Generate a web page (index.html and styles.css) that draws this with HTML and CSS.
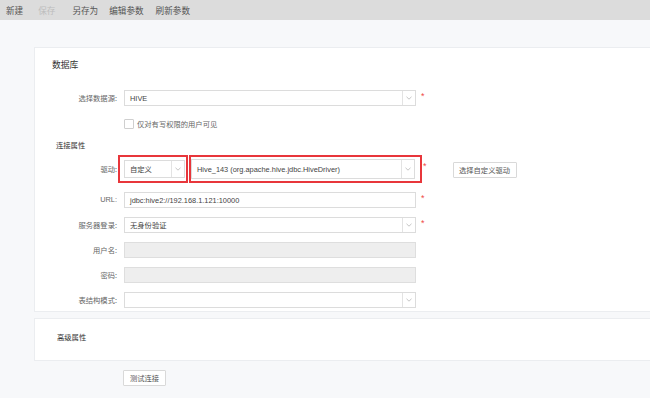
FILE: index.html
```html
<!DOCTYPE html>
<html lang="zh-CN">
<head>
<meta charset="utf-8">
<title>数据库连接</title>
<link rel="stylesheet" href="styles.css">
</head>
<body>
<div class="toolbar">
  <span class="tb tb-new">新建</span>
  <span class="tb tb-save disabled">保存</span>
  <span class="tb tb-saveas">另存为</span>
  <span class="tb tb-edit">编辑参数</span>
  <span class="tb tb-refresh">刷新参数</span>
</div>
<div class="page">
  <section class="card card-main">
    <h2 class="title">数据库</h2>
    <div class="row row-first">
      <label class="lbl">选择数据源:</label>
      <div class="select field"><span class="val latin">HIVE</span><span class="arrow"><svg width="6" height="4" viewBox="0 0 6 4"><polyline points="0.5,0.8 3,3.2 5.5,0.8" fill="none" stroke="#b5b5b5" stroke-width="0.8"/></svg></span></div>
      <span class="req">*</span>
    </div>
    <div class="row row-check">
      <span class="lbl"></span>
      <span class="checkbox"></span>
      <span class="check-text">仅对有写权限的用户可见</span>
    </div>
    <h3 class="subtitle">连接属性</h3>
    <div class="row row-driver">
      <label class="lbl">驱动:</label>
      <div class="mark mark-type">
        <div class="select sel-type"><span class="val">自定义</span><span class="arrow"><svg width="6" height="4" viewBox="0 0 6 4"><polyline points="0.5,0.8 3,3.2 5.5,0.8" fill="none" stroke="#b5b5b5" stroke-width="0.8"/></svg></span></div>
      </div>
      <div class="mark mark-driver">
        <div class="select sel-driver"><span class="val latin">Hive_143 (org.apache.hive.jdbc.HiveDriver)</span><span class="arrow"><svg width="6" height="4" viewBox="0 0 6 4"><polyline points="0.5,0.8 3,3.2 5.5,0.8" fill="none" stroke="#b5b5b5" stroke-width="0.8"/></svg></span></div>
      </div>
      <span class="req req-driver">*</span>
      <button class="btn btn-driver">选择自定义驱动</button>
    </div>
    <div class="row">
      <label class="lbl latin">URL:</label>
      <div class="input field"><span class="val latin">jdbc:hive2://192.168.1.121:10000</span></div>
      <span class="req">*</span>
    </div>
    <div class="row">
      <label class="lbl">服务器登录:</label>
      <div class="select field"><span class="val">无身份验证</span><span class="arrow"><svg width="6" height="4" viewBox="0 0 6 4"><polyline points="0.5,0.8 3,3.2 5.5,0.8" fill="none" stroke="#b5b5b5" stroke-width="0.8"/></svg></span></div>
      <span class="req">*</span>
    </div>
    <div class="row">
      <label class="lbl">用户名:</label>
      <div class="input field disabled"></div>
    </div>
    <div class="row">
      <label class="lbl">密码:</label>
      <div class="input field disabled"></div>
    </div>
    <div class="row">
      <label class="lbl">表结构模式:</label>
      <div class="select field"><span class="val"></span><span class="arrow"><svg width="6" height="4" viewBox="0 0 6 4"><polyline points="0.5,0.8 3,3.2 5.5,0.8" fill="none" stroke="#b5b5b5" stroke-width="0.8"/></svg></span></div>
    </div>
  </section>
  <section class="card card-adv">
    <h3 class="subtitle adv-title">高级属性</h3>
  </section>
  <div class="actions">
    <button class="btn btn-test">测试连接</button>
  </div>
</div>
</body>
</html>
```
FILE: styles.css
```css
* { box-sizing: border-box; }
html, body {
  margin: 0;
  padding: 0;
  background: #f7f8fa;
  overflow: hidden;
  font-family: "Noto Sans CJK SC", "Liberation Sans", sans-serif;
  color: #555;
}
.toolbar {
  height: 20px;
  background: #dcdcdc;
  display: flex;
  align-items: center;
  padding-left: 6px;
  font-size: 8.6px;
  color: #555;
}
.tb { line-height: 12px; white-space: nowrap; }
.tb-save { margin-left: 15px; }
.tb-saveas { margin-left: 17px; }
.tb-edit { margin-left: 11px; }
.tb-refresh { margin-left: 12px; }
.tb.disabled { color: #bdbdbd; }

.page {
  padding: 27px 0 0 34px;
}
.card {
  background: #fff;
  border: 1px solid #ebedf0;
  border-right: none;
  margin-right: -10px;
}
.card-main {
  height: 265px;
  padding-top: 12px;
}
.title {
  margin: 0 0 0 17px;
  font-size: 8.8px;
  line-height: 10px;
  font-weight: normal;
  color: #333;
}
.subtitle {
  margin: 8px 0 0 21px;
  font-size: 7.3px;
  line-height: 10px;
  font-weight: normal;
  color: #333;
}
.row {
  display: flex;
  align-items: flex-start;
  margin-top: 9px;
  height: 16px;
}
.row-first { margin-top: 20px; }
.row-check { margin-top: 10px; align-items: center; }
.row-driver { margin-top: 5px; height: 28px; align-items: flex-start; }
.lbl {
  width: 82px;
  flex: none;
  text-align: right;
  font-size: 7.3px;
  line-height: 16px;
  color: #666;
  margin-right: 7px;
}
.row-driver .lbl { line-height: 28px; }
.latin { font-family: "Liberation Sans", "Noto Sans CJK SC", sans-serif; }
.lbl.latin { font-size: 7.4px; }

.select, .input {
  height: 16px;
  border: 1px solid #dcdcdc;
  background: #fff;
  display: flex;
  align-items: center;
  flex: none;
}
.field { width: 292px; }
.input.disabled { background: #eeeeee; border-color: #dedede; }
.val {
  flex: 1;
  padding-left: 5px;
  font-size: 7.3px;
  color: #444;
  white-space: nowrap;
  overflow: hidden;
}
.val.latin { font-size: 7.4px; }
.arrow {
  width: 13px;
  height: 100%;
  border-left: 1px solid #e3e3e3;
  display: flex;
  align-items: center;
  justify-content: center;
  flex: none;
}
.arrow svg { display: block; }
.req {
  color: #f04848;
  font-family: "Liberation Sans", sans-serif;
  font-size: 9px;
  line-height: 9px;
  margin: 2px 0 0 5px;
}
.checkbox {
  width: 10px;
  height: 10px;
  border: 1px solid #cfcfcf;
  border-radius: 1px;
  background: #fff;
  flex: none;
}
.check-text {
  margin-left: 3px;
  font-size: 7.3px;
  color: #666;
}

.mark {
  border: 2px solid #e8363b;
  height: 28px;
  display: flex;
  align-items: center;
  flex: none;
}
.mark-type {
  width: 70px;
  margin-left: -6px;
  padding-left: 4px;
}
.sel-type { width: 61px; height: 18px; }
.mark-driver {
  width: 233px;
  margin-left: 1px;
}
.sel-driver { width: 224px; height: 20px; }
.req-driver { margin: 7px 0 0 1px; }
.btn {
  font-family: "Noto Sans CJK SC", sans-serif;
  font-size: 7.3px;
  color: #555;
  background: #fff;
  border: 1px solid #d9d9d9;
  border-radius: 1px;
  height: 16px;
  padding: 0;
  line-height: 14px;
}
.btn-driver {
  width: 64px;
  margin: 7px 0 0 26px;
}
.card-adv {
  margin-top: 6px;
  height: 43px;
  padding-top: 13px;
}
.adv-title { margin: 0 0 0 22px; }
.actions {
  display: flex;
  padding: 9px 0 0 89px;
}
.btn-test { width: 43px; }
```
